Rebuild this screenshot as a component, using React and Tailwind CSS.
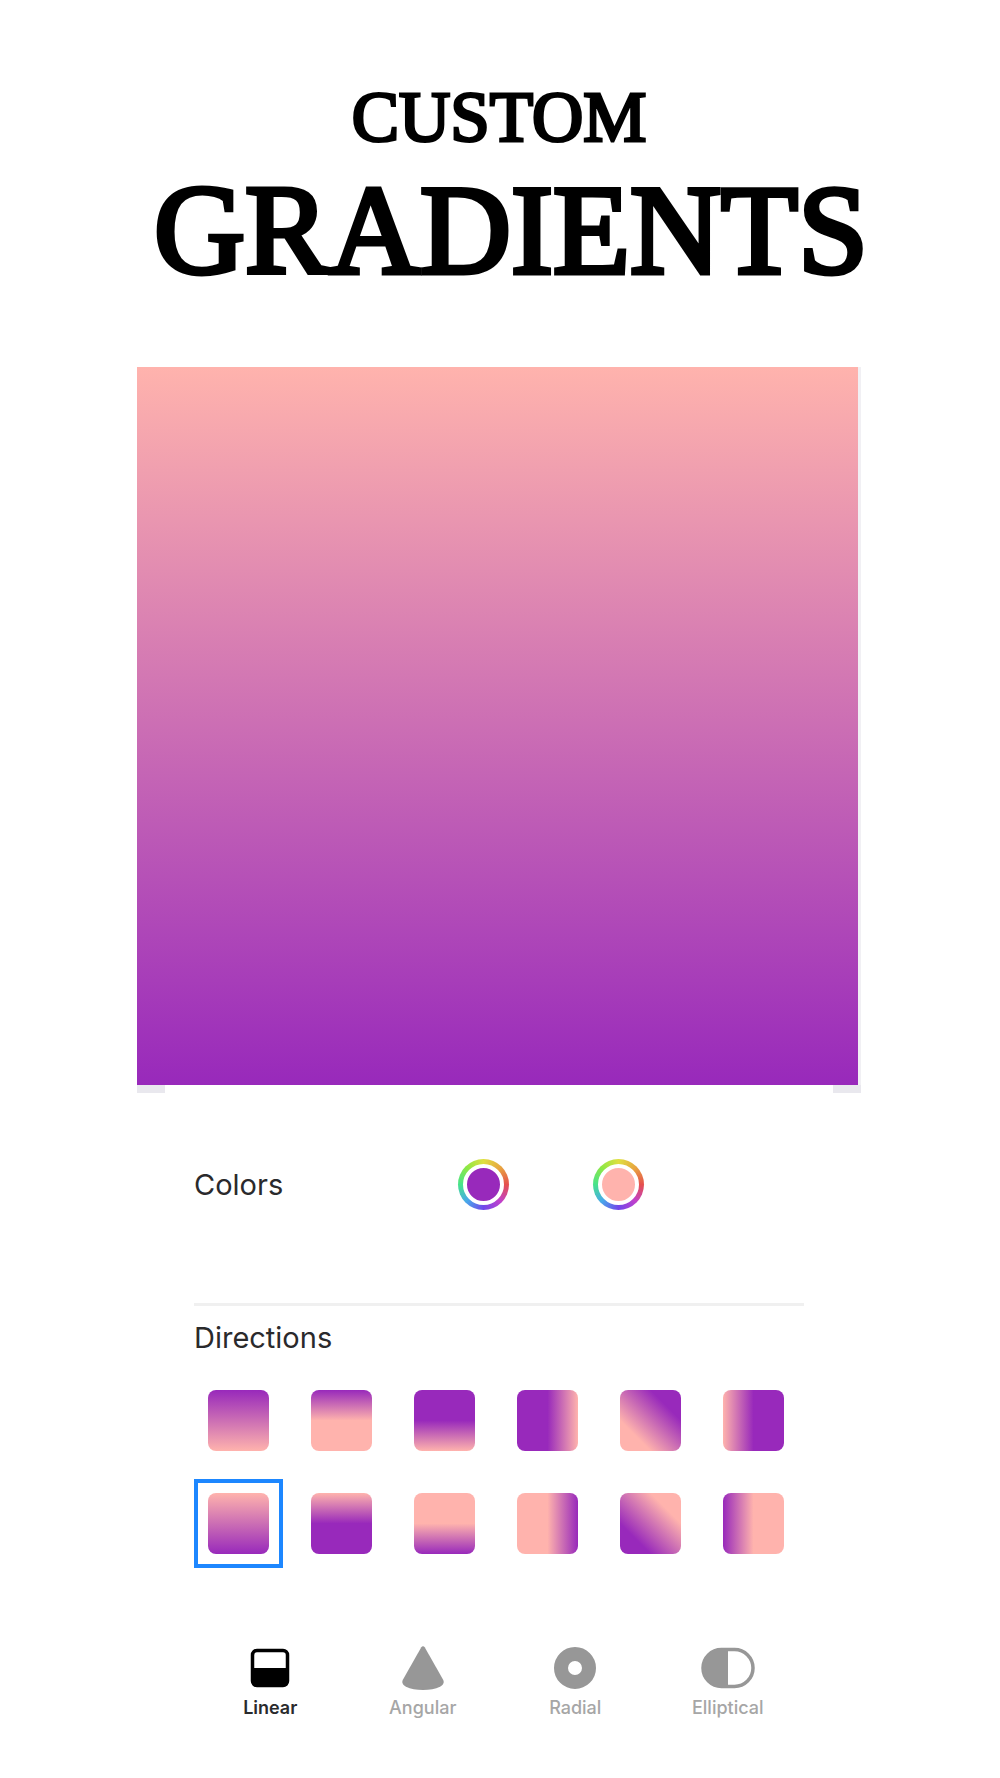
import { useState } from "react";

const colors = [
  { name: "First color", fill: "bg-[#9829bb]" },
  { name: "Second color", fill: "bg-[#ffb3ad]" },
];

const directions = [
  { name: "Bottom to top", fill: "bg-[linear-gradient(to_bottom,#9829bb,#ffb3ad)]" },
  { name: "Short top", fill: "bg-[linear-gradient(to_bottom,#9829bb,#ffb3ad_50%)]" },
  { name: "Short bottom", fill: "bg-[linear-gradient(to_bottom,#9829bb_50%,#ffb3ad)]" },
  { name: "Short right", fill: "bg-[linear-gradient(to_right,#9829bb_50%,#ffb3ad)]" },
  { name: "Diagonal", fill: "bg-[linear-gradient(to_bottom_left,#9829bb_25%,#ffb3ad_75%)]" },
  { name: "Short left", fill: "bg-[linear-gradient(to_left,#9829bb_50%,#ffb3ad)]" },
  { name: "Top to bottom", fill: "bg-[linear-gradient(to_bottom,#ffb3ad,#9829bb)]" },
  { name: "Short top reversed", fill: "bg-[linear-gradient(to_bottom,#ffb3ad,#9829bb_50%)]" },
  { name: "Short bottom reversed", fill: "bg-[linear-gradient(to_bottom,#ffb3ad_50%,#9829bb)]" },
  { name: "Short right reversed", fill: "bg-[linear-gradient(to_right,#ffb3ad_50%,#9829bb)]" },
  { name: "Diagonal reversed", fill: "bg-[linear-gradient(to_bottom_left,#ffb3ad_25%,#9829bb_75%)]" },
  { name: "Short left reversed", fill: "bg-[linear-gradient(to_left,#ffb3ad_50%,#9829bb)]" },
];

function LinearIcon() {
  return (
    <svg width="56" height="48" viewBox="0 0 56 48" fill="none" aria-hidden="true">
      <rect x="10.5" y="6.5" width="35" height="35" rx="4.5" stroke="currentColor" strokeWidth="3.5" />
      <path d="M10 24h36v14a4 4 0 0 1-4 4H14a4 4 0 0 1-4-4z" fill="currentColor" />
    </svg>
  );
}

function AngularIcon() {
  return (
    <svg width="56" height="48" viewBox="0 0 56 48" fill="currentColor" aria-hidden="true">
      <path d="M26.300 3.200c.8-1.300 2.600-1.300 3.400 0L48 35.500c1.600 3 .3 5.500-3 7.200C40.500 45 34.500 46 28 46s-12.500-1-17-3.300c-3.300-1.700-4.600-4.200-3-7.200z" />
    </svg>
  );
}

function RadialIcon() {
  return (
    <svg width="56" height="48" viewBox="0 0 56 48" fill="none" aria-hidden="true">
      <circle cx="28" cy="24" r="14" stroke="currentColor" strokeWidth="14" />
    </svg>
  );
}

function EllipticalIcon() {
  return (
    <svg width="56" height="48" viewBox="0 0 56 48" fill="none" aria-hidden="true">
      <rect x="3" y="5.5" width="50" height="37" rx="18.5" stroke="currentColor" strokeWidth="3.5" />
      <path d="M28 5v38h-6.5a19 19 0 0 1 0-38z" fill="currentColor" />
    </svg>
  );
}

const types = [
  { name: "Linear", Icon: LinearIcon },
  { name: "Angular", Icon: AngularIcon },
  { name: "Radial", Icon: RadialIcon },
  { name: "Elliptical", Icon: EllipticalIcon },
];

export default function App() {
  const [direction, setDirection] = useState(6);
  const [type, setType] = useState("Linear");

  return (
    <main className="min-h-screen bg-white pt-[77px] pr-0.5 pb-10 font-['Inter','Liberation_Sans',sans-serif] text-[#2a2a2c]">

      {/* HEADING */}
      <h1 className="text-center font-['Liberation_Serif',serif] text-black">
        <span className="block text-[71px] leading-[80px] [-webkit-text-stroke:3px_black]">CUSTOM</span>
        <span className="block pt-1 pl-6 text-[126px] leading-[140px] [-webkit-text-stroke:5px_black]">GRADIENTS</span>
      </h1>

      {/* PREVIEW */}
      <section aria-label="Preview" className="mx-auto mt-[66px] w-full max-w-[724px]">
        <div className="border-r-3 border-[#f1f0f4]">
          <div className="h-[718px] bg-[linear-gradient(to_bottom,#ffb3ad,#9829bb)]" />
        </div>
        <div className="flex justify-between">
          <div className="h-2 w-7 bg-[#e9e8ee]" />
          <div className="h-2 w-7 bg-[#e9e8ee]" />
        </div>
      </section>

      <div className="mx-auto w-full max-w-[610px]">

        {/* COLORS */}
        <section className="mt-[66px] flex items-center">
          <h2 className="w-[264px] text-[29px] leading-9">Colors</h2>
          <div className="flex gap-[84px]">
            {colors.map((color) => (
              <button
                key={color.name}
                type="button"
                aria-label={color.name}
                className="size-[51px] rounded-full bg-[conic-gradient(#dfdf40,#e8a540_45deg,#e5504d_90deg,#c040cc_135deg,#7147ea_180deg,#48a8ea_225deg,#47e38b_270deg,#8de845_315deg,#dfdf40)] p-[5px]"
              >
                <span className={`block size-full rounded-full border-4 border-white ${color.fill}`} />
              </button>
            ))}
          </div>
        </section>

        <hr className="mt-[93px] border-t-3 border-[#f0f0f0]" />

        {/* DIRECTIONS */}
        <section>
          <h2 className="mt-3.5 text-[29px] leading-9">Directions</h2>
          <div className="mt-5 grid grid-cols-[repeat(6,89px)] gap-3.5">
            {directions.map((item, i) => (
              <button
                key={item.name}
                type="button"
                aria-label={item.name}
                aria-pressed={i === direction}
                onClick={() => setDirection(i)}
                className={`flex size-[89px] items-center justify-center border-4 ${
                  i === direction ? "border-[#1d87ff]" : "border-transparent"
                }`}
              >
                <span className={`size-[61px] rounded-lg ${item.fill}`} />
              </button>
            ))}
          </div>
        </section>

        {/* GRADIENT TYPE */}
        <nav className="mt-[76px] grid grid-cols-4">
          {types.map(({ name, Icon }) => (
            <button
              key={name}
              type="button"
              onClick={() => setType(name)}
              className={`flex flex-col items-center gap-1 text-[18px] leading-6 ${
                name === type ? "font-semibold text-black" : "font-medium text-[#979797]"
              }`}
            >
              <Icon />
              <span className={name === type ? "text-[#2a2a2c]" : "text-[#a6a6a6]"}>{name}</span>
            </button>
          ))}
        </nav>
      </div>

    </main>
  );
}
